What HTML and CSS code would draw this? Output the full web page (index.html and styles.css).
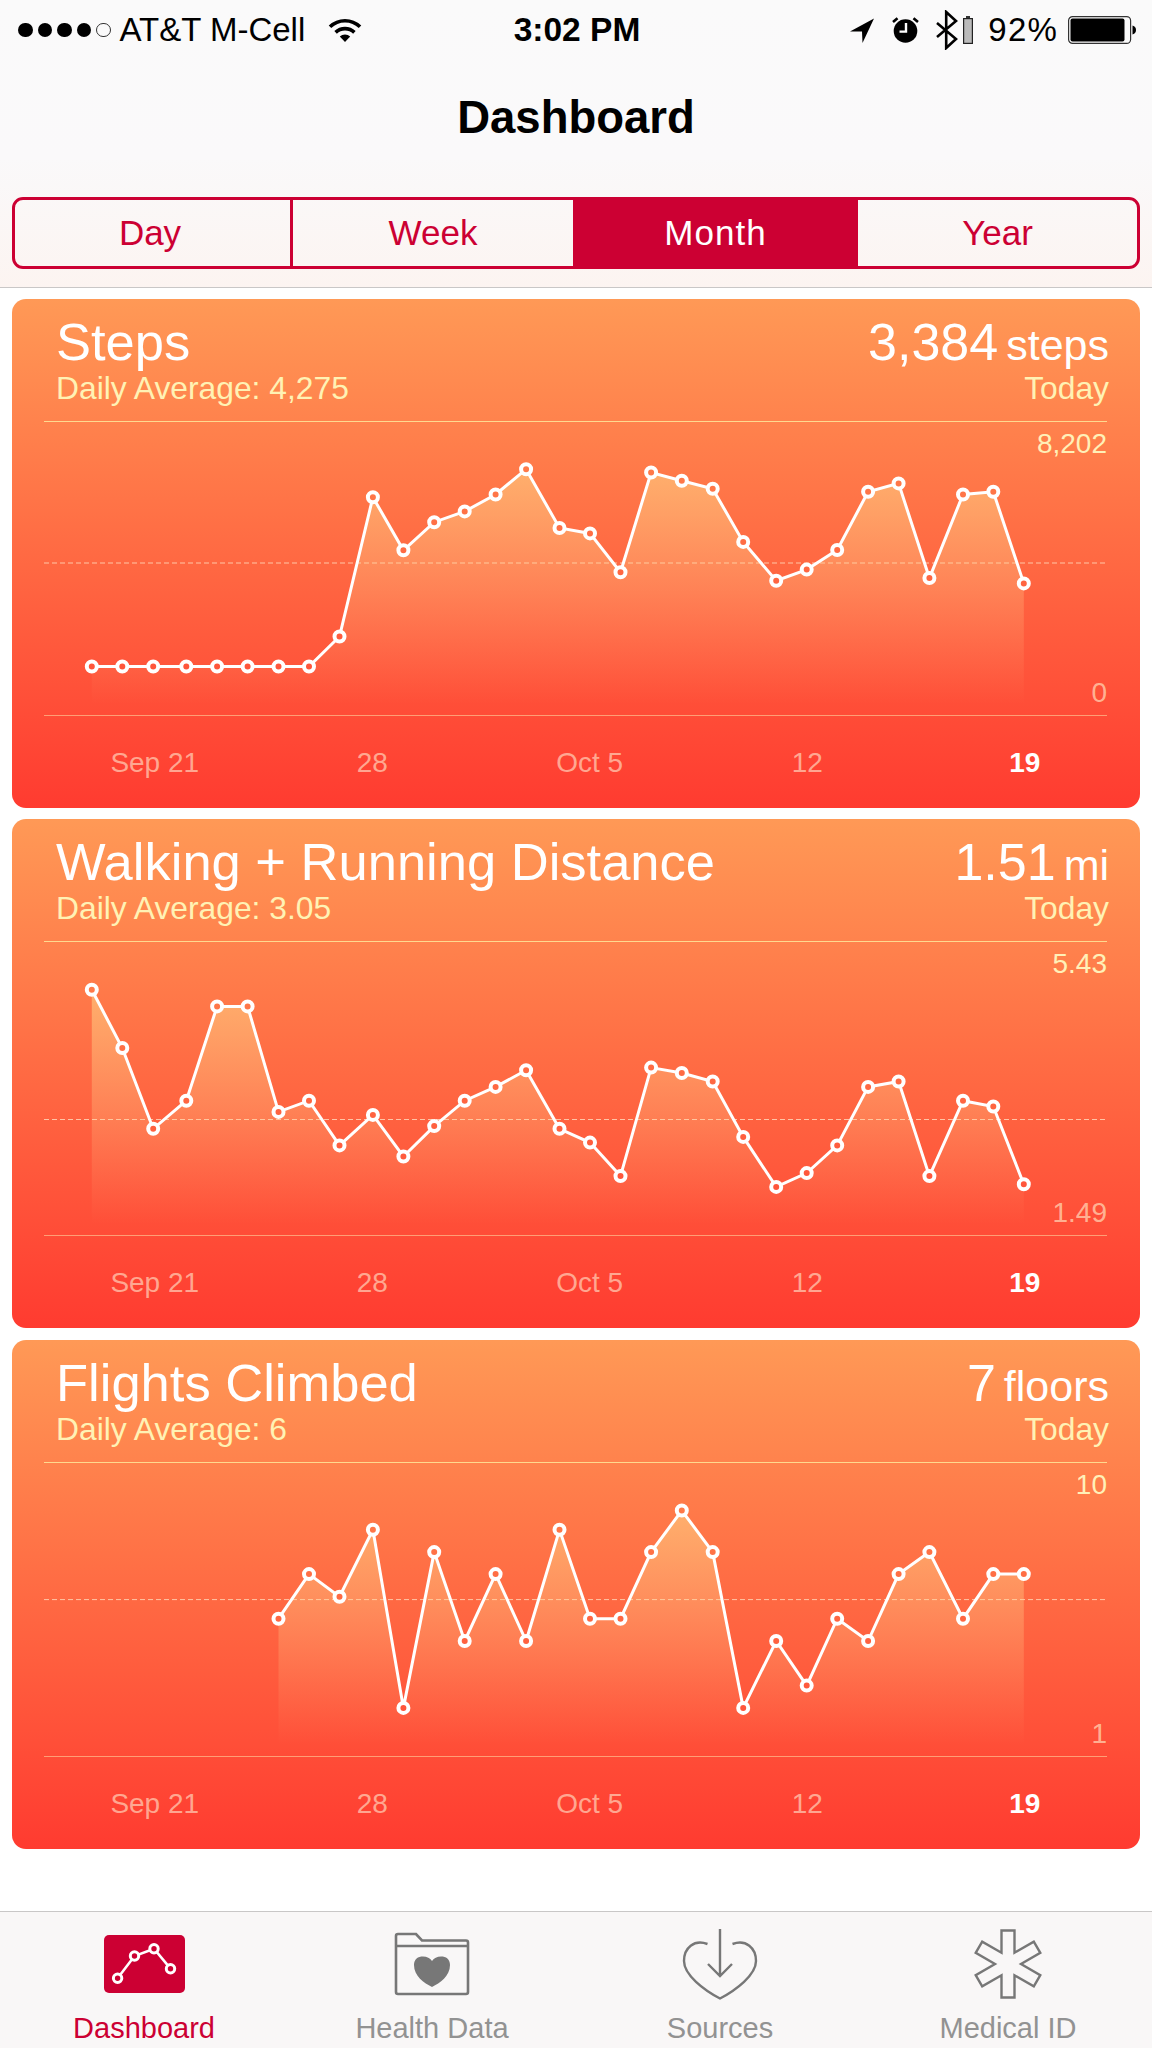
FILE: index.html
```html
<!DOCTYPE html>
<html lang="en">
<head>
    <meta charset="UTF-8">
    <title>Dashboard</title>
    <link rel="stylesheet" href="styles.css">
</head>
<body>
    <header class="top">
        <div class="status">
            <div class="status-left">
                <div class="signal"><i></i><i></i><i></i><i></i><i class="off"></i></div>
                <span class="carrier">AT&amp;T M-Cell</span>
                <svg class="wifi" width="34" height="25" viewBox="0 0 34 25">
                    <path d="M2 9.8A21.5 21.5 0 0 1 32 9.8M7.6 15.4A13.6 13.6 0 0 1 26.4 15.4" fill="none" stroke="#000" stroke-width="3.6"/>
                    <path d="M17 25L11.8 19.6A7.4 7.4 0 0 1 22.2 19.6Z" fill="#000"/>
                </svg>
            </div>
            <span class="clock">3:02 PM</span>
            <div class="status-right">
                <svg class="ico-loc" width="24" height="25" viewBox="0 0 24 25"><path d="M24 0.5L0 13.5L12 13.5L12.5 25Z" fill="#000"/></svg>
                <svg class="ico-alarm" width="27" height="26" viewBox="0 0 27 26">
                    <circle cx="13.5" cy="14" r="11.8" fill="#000"/>
                    <path d="M1 5L5.5 1.2M26 5L21.5 1.2" stroke="#000" stroke-width="2.6" fill="none"/>
                    <path d="M14 6V14.6H7.5" stroke="#fff" stroke-width="2.4" fill="none"/>
                </svg>
                <svg class="ico-bt" width="22" height="40" viewBox="0 0 22 40">
                    <path d="M1 13L20 29L10.2 38V2L20 11L1 27" stroke="#000" stroke-width="2.6" fill="none"/>
                </svg>
                <svg class="ico-minibatt" width="10" height="28" viewBox="0 0 10 28">
                    <rect x="3" y="0" width="4" height="2" fill="#333"/>
                    <rect x="0.6" y="2.6" width="8.8" height="24.8" fill="#bbb" stroke="#222" stroke-width="1.2"/>
                </svg>
                <span class="pct">92%</span>
                <svg class="ico-batt" width="68" height="28" viewBox="0 0 68 28">
                    <rect x="0.6" y="0.6" width="62" height="26.8" rx="4" fill="none" stroke="#333" stroke-width="1.2"/>
                    <rect x="2.5" y="2.5" width="54" height="23" rx="2" fill="#000"/>
                    <path d="M64.5 9.5C67 10 68 12 68 14C68 16 67 18 64.5 18.5Z" fill="#000"/>
                </svg>
            </div>
        </div>
        <h1 class="title">Dashboard</h1>
        <div class="segments">
            <div class="seg">Day</div>
            <div class="seg">Week</div>
            <div class="seg active">Month</div>
            <div class="seg">Year</div>
        </div>
    </header>

    <main class="cards">
        <section class="card">
            <div class="card-head">
                <div>
                    <div class="name">Steps</div>
                    <div class="sub">Daily Average: 4,275</div>
                </div>
                <div class="right">
                    <div class="value"><span class="num">3,384</span><span class="unit">steps</span></div>
                    <div class="sub">Today</div>
                </div>
            </div>
            <div class="plot">
                <svg class="chart" id="chartSteps" width="1063" height="293"></svg>
                <span class="y-max">8,202</span>
                <span class="y-min">0</span>
            </div>
            <div class="dates"><span>Sep 21</span><span>28</span><span>Oct 5</span><span>12</span><span class="now">19</span></div>
        </section>

        <section class="card">
            <div class="card-head">
                <div>
                    <div class="name">Walking + Running Distance</div>
                    <div class="sub">Daily Average: 3.05</div>
                </div>
                <div class="right">
                    <div class="value"><span class="num">1.51</span><span class="unit">mi</span></div>
                    <div class="sub">Today</div>
                </div>
            </div>
            <div class="plot">
                <svg class="chart" id="chartDistance" width="1063" height="293"></svg>
                <span class="y-max">5.43</span>
                <span class="y-min">1.49</span>
            </div>
            <div class="dates"><span>Sep 21</span><span>28</span><span>Oct 5</span><span>12</span><span class="now">19</span></div>
        </section>

        <section class="card">
            <div class="card-head">
                <div>
                    <div class="name">Flights Climbed</div>
                    <div class="sub">Daily Average: 6</div>
                </div>
                <div class="right">
                    <div class="value"><span class="num">7</span><span class="unit">floors</span></div>
                    <div class="sub">Today</div>
                </div>
            </div>
            <div class="plot">
                <svg class="chart" id="chartFlights" width="1063" height="293"></svg>
                <span class="y-max">10</span>
                <span class="y-min">1</span>
            </div>
            <div class="dates"><span>Sep 21</span><span>28</span><span>Oct 5</span><span>12</span><span class="now">19</span></div>
        </section>
    </main>

    <nav class="tabbar">
        <div class="tab active">
            <div class="tab-icon">
                <svg width="81" height="58" viewBox="0 0 81 58">
                    <rect width="81" height="58" rx="5" fill="#cc0033"/>
                    <path d="M13.6 43.3L30.5 21L50 13.7L66.5 33.7" fill="none" stroke="#fff" stroke-width="2.6"/>
                    <g fill="#cc0033" stroke="#fff" stroke-width="3">
                        <circle cx="13.6" cy="43.3" r="4.2"/>
                        <circle cx="30.5" cy="21" r="4.2"/>
                        <circle cx="50" cy="13.7" r="4.2"/>
                        <circle cx="66.5" cy="33.7" r="4.2"/>
                    </g>
                </svg>
            </div>
            <span>Dashboard</span>
        </div>
        <div class="tab">
            <div class="tab-icon">
                <svg width="76" height="64" viewBox="0 0 76 64">
                    <path d="M2 13.5V4Q2 2 4 2H22L28 8.5H72Q74 8.5 74 10.5V60Q74 62 72 62H4Q2 62 2 60V14H74" fill="none" stroke="#777" stroke-width="2.6"/>
                    <path d="M38 55C30 51 20 44 20 33C20 27 24 24.500 29 24.500C33 24.500 36 26 38 29C40 26 43 24.500 47 24.500C52 24.500 56 27 56 33C56 44 46 51 38 55Z" fill="#777"/>
                </svg>
            </div>
            <span>Health Data</span>
        </div>
        <div class="tab">
            <div class="tab-icon">
                <svg width="76" height="72" viewBox="0 0 76 72">
                    <path d="M25.500 16C12 11 2 20 2 33C2 47 22 62 38 70.500C54 62 74 47 74 33C74 20 64 11 50.500 16" fill="none" stroke="#777" stroke-width="2.4"/>
                    <path d="M38 1V48M26 36L38 48L50 36" fill="none" stroke="#777" stroke-width="2.4"/>
                </svg>
            </div>
            <span>Sources</span>
        </div>
        <div class="tab">
            <div class="tab-icon">
                <svg width="72" height="72" viewBox="-36 -36 72 72">
                    <polygon points="-6.5,-33.500 6.500,-33.500 6.500,-11.300 25.800,-22.400 32.300,-11.200 13,0 32.300,11.200 25.800,22.400 6.500,11.300 6.500,33.500 -6.500,33.500 -6.500,11.300 -25.800,22.400 -32.300,11.200 -13,0 -32.300,-11.200 -25.800,-22.400 -6.500,-11.300" fill="none" stroke="#777" stroke-width="2.4"/>
                </svg>
            </div>
            <span>Medical ID</span>
        </div>
    </nav>

    <script src="charts.js"></script>
</body>
</html>
```

FILE: styles.css
```css
* {
    box-sizing: border-box;
}
body {
    margin: 0;
    height: 2048px;
    display: flex;
    flex-direction: column;
    background-color: #fff;
    font-family: "Liberation Sans", Arial, sans-serif;
    color: #000;
    overflow: hidden;
}

/* top bar */
.top {
    height: 288px;
    flex: none;
    background: linear-gradient(#fafafa 0%, #faf9fa 55%, #fcf4f1 100%);
    border-bottom: 1px solid #c9c7c7;
}
.status {
    height: 59px;
    padding: 1px 16px 0 18px;
    display: grid;
    grid-template-columns: 1fr auto 1fr;
    align-items: center;
    font-size: 33px;
    line-height: 38px;
}
.status-left,
.status-right {
    display: flex;
    align-items: center;
}
.status-right {
    justify-content: flex-end;
}
.signal {
    display: flex;
    gap: 5px;
    margin-right: 9px;
}
.signal i {
    width: 14.5px;
    height: 14.5px;
    border-radius: 50%;
    background-color: #000;
}
.signal i.off {
    background: none;
    border: 1.5px solid #333;
}
.wifi {
    margin-left: 23px;
    margin-top: -2px;
}
.clock {
    font-size: 33.5px;
    font-weight: bold;
}
.ico-alarm {
    margin-left: 18px;
}
.ico-bt {
    margin-left: 17px;
}
.ico-minibatt {
    margin-left: 5px;
}
.pct {
    margin-left: 15px;
    letter-spacing: 1.2px;
}
.ico-batt {
    margin-left: 10px;
}
.title {
    margin: 0;
    height: 117px;
    line-height: 117px;
    text-align: center;
    font-size: 45.5px;
    font-weight: bold;
}

/* segmented control */
.segments {
    margin: 21px 12px 0;
    height: 72px;
    display: grid;
    grid-template-columns: 275px 283px 282px 1fr;
    border: 3px solid #cc0033;
    border-radius: 11px;
    overflow: hidden;
}
.seg {
    text-align: center;
    line-height: 66px;
    font-size: 35px;
    color: #cc0033;
    border-left: 3px solid #cc0033;
}
.seg:first-child {
    border-left: none;
    padding-right: 5px;
}
.seg.active {
    background-color: #cc0033;
    color: #fff;
    letter-spacing: 1px;
}

/* cards */
.cards {
    flex: 1;
    padding: 11px 12px 0;
    display: flex;
    flex-direction: column;
    gap: 11.4px;
}
.card {
    height: 509px;
    padding: 14px 33px 0 32px;
    border-radius: 14px;
    color: #fff;
    background: linear-gradient(#ff9956, #ff3b30);
}
.card-head {
    display: flex;
    justify-content: space-between;
    padding-left: 12px;
    margin-right: -2px;
}
.right {
    text-align: right;
}
.name {
    font-size: 52.5px;
    line-height: 58px;
}
.value {
    height: 58px;
    line-height: 58px;
}
.num {
    font-size: 52px;
}
.unit {
    font-size: 43px;
    margin-left: 8px;
}
.sub {
    font-size: 31.8px;
    line-height: 35px;
    color: #fff2b4;
}
.plot {
    position: relative;
    height: 295px;
    margin-top: 15px;
    border-top: 1px solid #ffd98f;
    border-bottom: 1px solid rgba(255, 225, 170, 0.55);
}
.chart {
    display: block;
}
.y-max,
.y-min {
    position: absolute;
    right: 0;
    font-size: 28px;
    line-height: 32px;
}
.y-max {
    top: 6px;
    color: #fff0b8;
}
.y-min {
    bottom: 6px;
    color: rgba(255, 235, 200, 0.65);
}
.dates {
    display: grid;
    grid-template-columns: repeat(5, 217.5px);
    margin: 31px 0 0 2px;
    font-size: 28px;
    line-height: 32px;
    text-align: center;
    color: rgba(255, 236, 210, 0.6);
}
.dates .now {
    color: #fff;
    font-weight: bold;
}

/* tab bar */
.tabbar {
    height: 137px;
    flex: none;
    display: flex;
    padding-top: 12px;
    background-color: #f9f7f7;
    border-top: 1px solid #c9c7c7;
}
.tab {
    flex: 1;
    display: flex;
    flex-direction: column;
    align-items: center;
    font-size: 29px;
    line-height: 32px;
    color: #929292;
}
.tab.active {
    color: #cc0033;
}
.tab-icon {
    height: 80px;
    margin-bottom: 8px;
    display: flex;
    align-items: center;
}
.tab-icon svg {
    display: block;
}
```

FILE: charts.js
```js
// x position of each day, same for all three charts
const XS = [47.8, 78.3, 109.2, 142.3, 173.1, 203.6, 234.5, 265, 295.5, 328.9, 359.4, 390.2, 420.7, 451.6, 482.1, 515.5,
    546, 576.5, 607.1, 637.8, 668.7, 699.2, 732.2, 762.7, 793.2, 824.1, 854.6, 885.4, 919, 949.3, 979.8];

const CHARTS = [
    {
        id: 'chartSteps',
        mid: 141,
        ys: [245, 245, 245, 245, 245, 245, 245, 245, 215, 75.7, 128.8, 100.7, 89.9, 73, 47.7, 106.5,
            111.9, 150.8, 51, 59.2, 67.3, 120.4, 159.2, 148.1, 128.5, 70.3, 61.9, 156.5, 73, 70.3, 161.9]
    },
    {
        id: 'chartDistance',
        mid: 177.5,
        ys: [48.3, 106.5, 187.3, 159.2, 64.9, 64.9, 170.4, 159.2, 203.9, 173.4, 215, 184.6, 159.2, 145.4, 128.8, 187.3,
            201.1, 234.6, 126.1, 131.5, 140, 195.4, 245.4, 231.6, 203.9, 145.4, 140, 234.6, 159.2, 165, 242.7]
    },
    {
        id: 'chartFlights',
        mid: 136.6,
        ys: [null, null, null, null, null, null, 156.2, 111.6, 134.2, 67.3, 245.4, 89.6, 178.5, 111.6, 178.5, 67.3,
            156.2, 156.2, 89.6, 48, 89.6, 245.4, 178.5, 223.1, 156.2, 178.5, 111.6, 89.6, 156.2, 111.6, 111.6]
    }
];

const NS = 'http://www.w3.org/2000/svg';

function el(name, attrs, parent) {
    const node = document.createElementNS(NS, name);
    Object.keys(attrs).forEach(key => node.setAttribute(key, attrs[key]));
    parent.appendChild(node);
    return node;
}

function gradient(defs, id, y1, y2, stops) {
    const g = el('linearGradient', { id: id, gradientUnits: 'userSpaceOnUse', x1: 0, x2: 0, y1: y1, y2: y2 }, defs);
    stops.forEach(s => el('stop', { offset: s[0], 'stop-color': s[1], 'stop-opacity': s[2] }, g));
}

function drawChart(chart) {
    const svg = document.getElementById(chart.id);
    const defs = el('defs', {}, svg);
    // hole of the dots shows the card colour
    gradient(defs, chart.id + 'Hole', -122, 387, [[0, '#ff9956', 1], [1, '#ff3b30', 1]]);
    gradient(defs, chart.id + 'Fill', 40, 282, [[0, '#ffe08c', 0.55], [0.5, '#ffd08c', 0.3], [1, '#ffc890', 0]]);

    el('line', {
        x1: 0, x2: 1063, y1: chart.mid, y2: chart.mid,
        stroke: '#ffe6c8', 'stroke-opacity': 0.75, 'stroke-dasharray': '5 3'
    }, svg);

    const pts = [];
    chart.ys.forEach((y, i) => {
        if (y !== null) pts.push([XS[i], y - 0.5]);
    });
    const line = pts.map(p => p[0] + ',' + p[1]).join(' ');
    const first = pts[0][0];
    const last = pts[pts.length - 1][0];

    el('polygon', { points: first + ',293 ' + line + ' ' + last + ',293', fill: 'url(#' + chart.id + 'Fill)' }, svg);
    el('polyline', { points: line, fill: 'none', stroke: '#fff', 'stroke-width': 3 }, svg);
    pts.forEach(p => {
        el('circle', { cx: p[0], cy: p[1], r: 5, fill: 'url(#' + chart.id + 'Hole)', stroke: '#fff', 'stroke-width': 4 }, svg);
    });
}

CHARTS.forEach(drawChart);
```
